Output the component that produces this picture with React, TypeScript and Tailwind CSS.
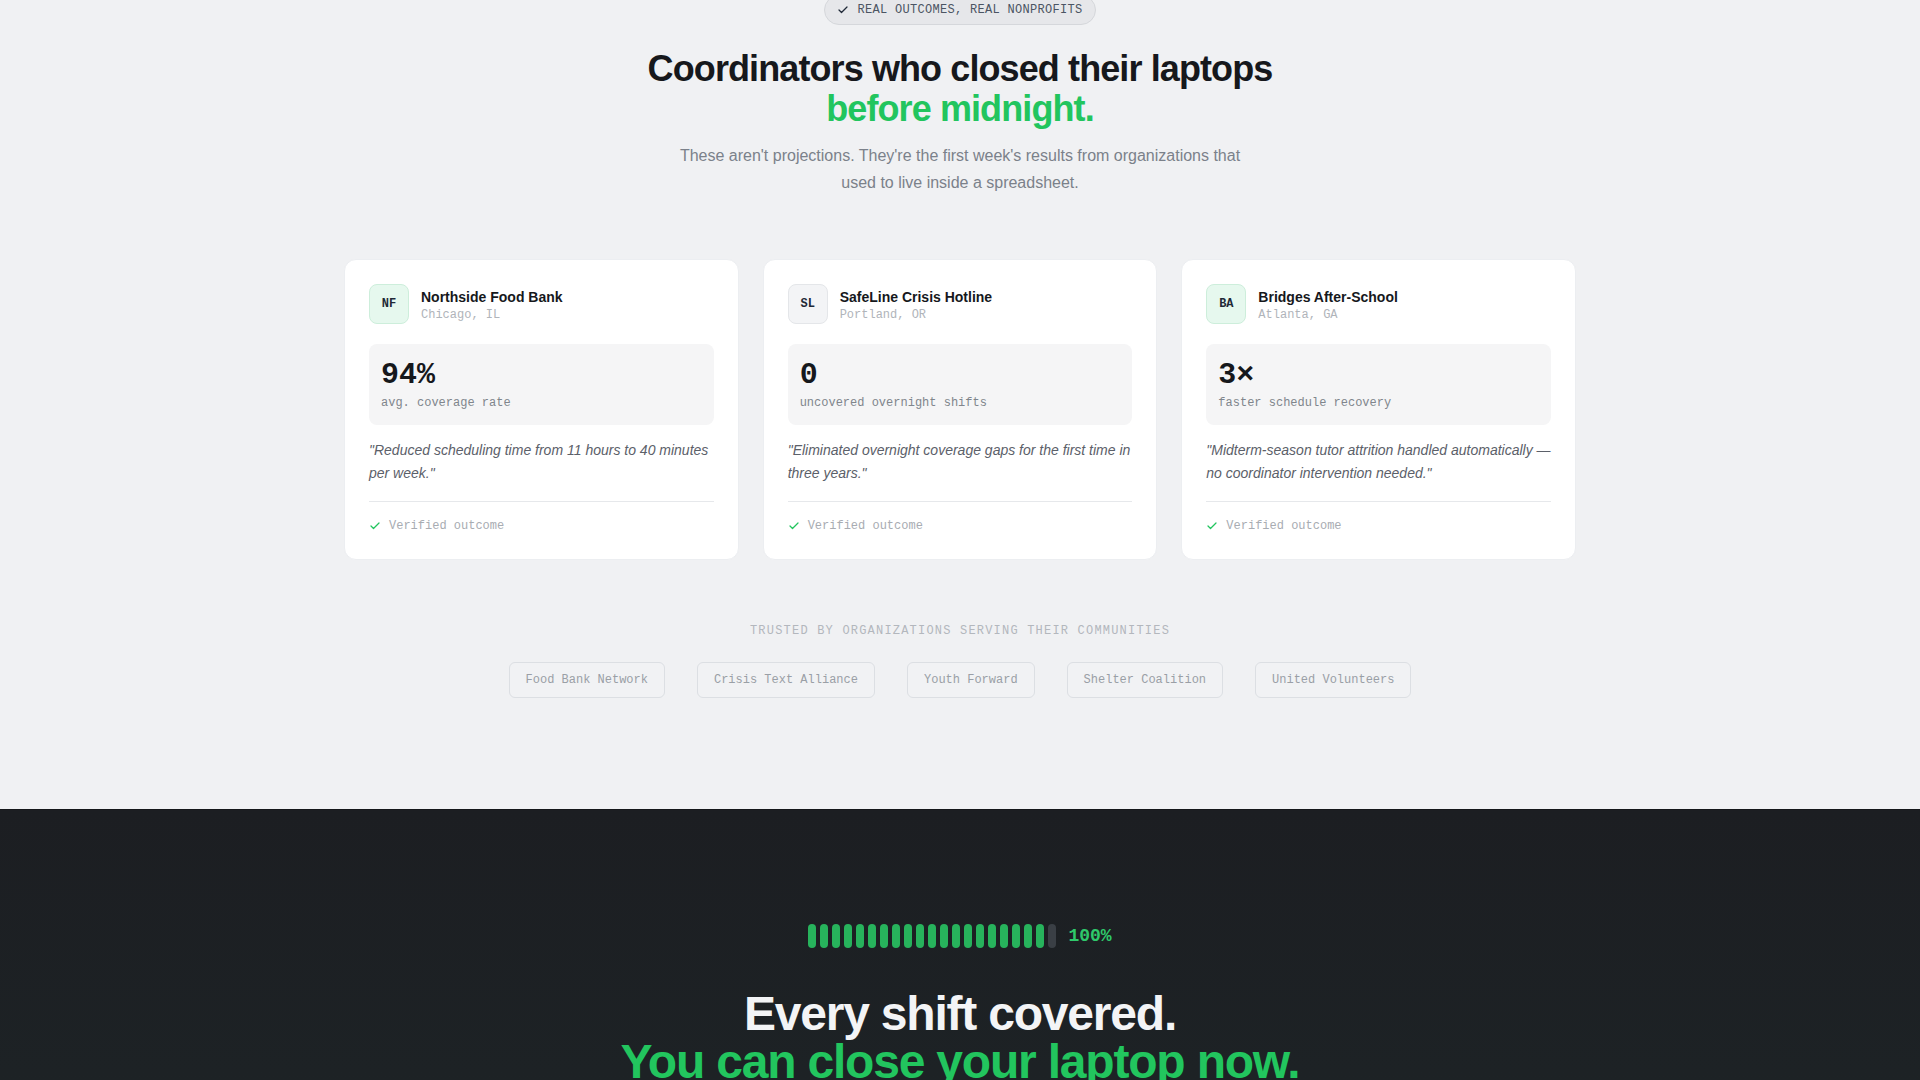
import React from "react";

const sans = "font-['Liberation_Sans',Arial,sans-serif]";
const mono = "font-['Liberation_Mono','Courier_New',monospace]";

function CheckIcon({ className }: { className?: string }) {
  return (
    <svg viewBox="0 0 24 24" fill="none" stroke="currentColor" strokeWidth={2.5} strokeLinecap="round" strokeLinejoin="round" className={className}>
      <path d="M20 6 9 17l-5-5" />
    </svg>
  );
}

type Card = {
  initials: string;
  name: string;
  place: string;
  stat: string;
  label: string;
  quote: string;
  green: boolean;
};

const cards: Card[] = [
  {
    initials: "NF",
    name: "Northside Food Bank",
    place: "Chicago, IL",
    stat: "94%",
    label: "avg. coverage rate",
    quote: "\"Reduced scheduling time from 11 hours to 40 minutes per week.\"",
    green: true,
  },
  {
    initials: "SL",
    name: "SafeLine Crisis Hotline",
    place: "Portland, OR",
    stat: "0",
    label: "uncovered overnight shifts",
    quote: "\"Eliminated overnight coverage gaps for the first time in three years.\"",
    green: false,
  },
  {
    initials: "BA",
    name: "Bridges After-School",
    place: "Atlanta, GA",
    stat: "3×",
    label: "faster schedule recovery",
    quote: "\"Midterm-season tutor attrition handled automatically — no coordinator intervention needed.\"",
    green: true,
  },
];

const orgs = ["Food Bank Network", "Crisis Text Alliance", "Youth Forward", "Shelter Coalition", "United Volunteers"];

export default function App() {
  const bars = Array.from({ length: 21 }, (_, i) => i < 20);
  return (
    <div className={`h-[1080px] w-full overflow-hidden bg-[#f0f1f3] ${sans}`}>
      <section className="flex flex-col items-center pb-[111px]">
        <div className={`-mt-[5px] flex items-center gap-2 rounded-full border border-[#d5d7db] bg-[#e6e7ea] px-3 py-[6px] text-xs tracking-wide text-[#4b5563] ${mono}`}>
          <CheckIcon className="h-3 w-3 text-[#1f2937]" />
          <span className="leading-4">REAL OUTCOMES, REAL NONPROFITS</span>
        </div>
        <h1 className="mt-6 text-center text-4xl font-bold leading-[1.1] tracking-tight text-[#16181c]">
          Coordinators who closed their laptops
          <br />
          <span className="text-[#22c55e]">before midnight.</span>
        </h1>
        <p className="mt-[14px] max-w-xl text-center text-base leading-[27px] text-[#7b818a]">
          These aren't projections. They're the first week's results from organizations that used to live inside a spreadsheet.
        </p>

        <div className="mt-[63px] grid w-full max-w-7xl grid-cols-3 gap-6 px-6">
          {cards.map((c) => (
            <div key={c.initials} className="flex flex-col rounded-xl border border-[#eceef1] bg-white px-6 pb-[25px] pt-6">
              <div className="flex items-center gap-3">
                <div
                  className={`flex h-10 w-10 items-center justify-center rounded-lg border text-xs font-bold text-[#1f2937] ${mono} ${
                    c.green ? "border-[#cdeedb] bg-[#e6f8ee]" : "border-[#e4e6e9] bg-[#f3f4f6]"
                  }`}
                >
                  {c.initials}
                </div>
                <div className="flex flex-col pt-0.5">
                  <span className="text-sm font-bold leading-5 text-[#16181c]">{c.name}</span>
                  <span className={`text-xs leading-4 text-[#b0b4ba] ${mono}`}>{c.place}</span>
                </div>
              </div>
              <div className="mt-5 flex flex-col rounded-lg bg-[#f5f5f6] px-3 pb-[14px] pt-4">
                <span className={`text-3xl font-bold leading-none text-[#16181c] ${mono}`}>{c.stat}</span>
                <span className={`mt-[5px] text-xs leading-4 text-[#80858c] ${mono}`}>{c.label}</span>
              </div>
              <p className="mt-[14px] text-sm italic leading-[22.75px] text-[#5b6069]">{c.quote}</p>
              <div className="mt-4 flex items-center gap-2 border-t border-[#e6e8eb] pt-4">
                <CheckIcon className="h-3 w-3 text-[#22c55e]" />
                <span className={`text-xs leading-4 text-[#a8acb2] ${mono}`}>Verified outcome</span>
              </div>
            </div>
          ))}
        </div>

        <p className={`mt-[63px] text-xs uppercase leading-4 tracking-widest text-[#b3b7bd] ${mono}`}>
          Trusted by organizations serving their communities
        </p>
        <div className="mt-[23px] flex items-center gap-8">
          {orgs.map((o) => (
            <span
              key={o}
              className={`rounded-md border border-[#dcdfe3] bg-[#f1f2f4] px-4 py-[9px] text-xs leading-4 text-[#9a9fa6] ${mono}`}
            >
              {o}
            </span>
          ))}
        </div>
      </section>

      <section className="flex flex-col items-center border-t border-[#141619] bg-[linear-gradient(180deg,#1c1e22_0%,#1d2225_60%,#1e2527_100%)] pb-40 pt-28">
        <div className="flex items-center gap-3">
          <div className="flex items-center gap-1">
            {bars.map((on, i) => (
              <div key={i} className={`h-6 w-2 rounded-sm ${on ? "bg-[#27b35c]" : "bg-[#3a3f45]"}`} />
            ))}
          </div>
          <span className={`text-lg font-bold leading-7 text-[#2fc96b] ${mono}`}>100%</span>
        </div>
        <h2 className="mt-10 text-center text-5xl font-bold leading-none tracking-tight text-[#f3f4f6]">
          Every shift covered.
          <br />
          <span className="text-[#22c55e]">You can close your laptop now.</span>
        </h2>
      </section>
    </div>
  );
}
